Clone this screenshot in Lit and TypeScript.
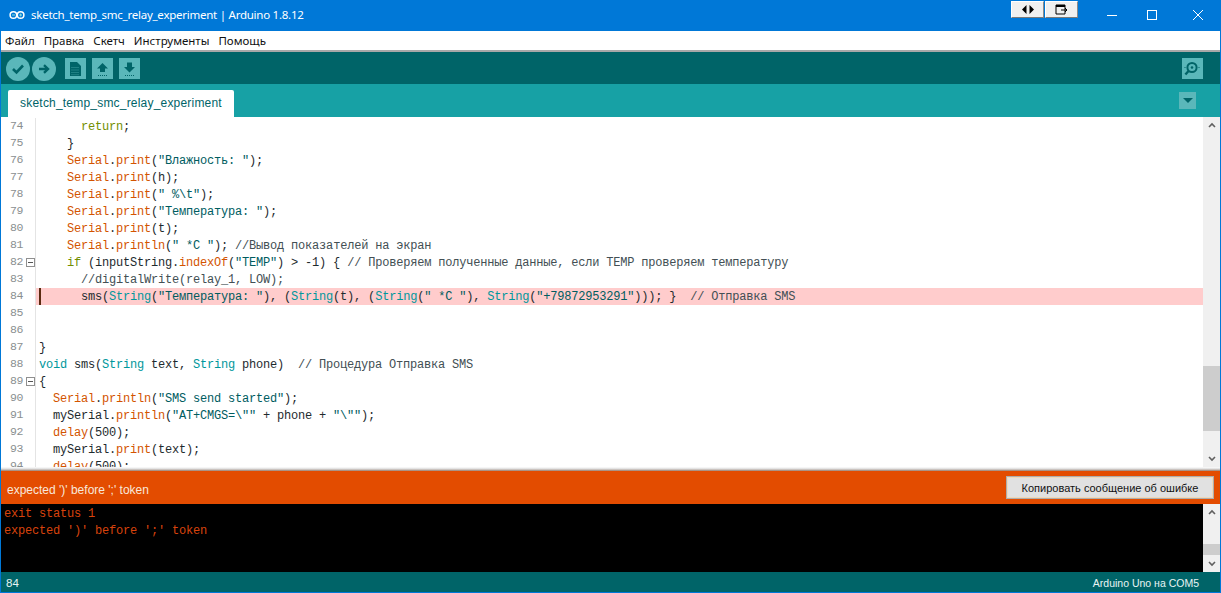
import { LitElement, html, css, svg } from "lit";
import { customElement } from "lit/decorators.js";

const CODE: [number, string][] = [
  [74, '      «k|return»;'],
  [75, '    }'],
  [76, '    «o|Serial».«o|print»(«s|"Влажность: "»);'],
  [77, '    «o|Serial».«o|print»(h);'],
  [78, '    «o|Serial».«o|print»(«s|" %\\t"»);'],
  [79, '    «o|Serial».«o|print»(«s|"Температура: "»);'],
  [80, '    «o|Serial».«o|print»(t);'],
  [81, '    «o|Serial».«o|println»(«s|" *C "»); «c|//Вывод показателей на экран»'],
  [82, '    «k|if» (inputString.«o|indexOf»(«s|"TEMP"») > -1) { «c|// Проверяем полученные данные, если TEMP проверяем температуру»'],
  [83, '      «c|//digitalWrite(relay_1, LOW);»'],
  [84, '      sms(«t|String»(«s|"Температура: "»), («t|String»(t), («t|String»(«s|" *C "»), «t|String»(«s|"+79872953291"»))); }  «c|// Отправка SMS»'],
  [85, ''],
  [86, ''],
  [87, '}'],
  [88, '«t|void» sms(«t|String» text, «t|String» phone)  «c|// Процедура Отправка SMS»'],
  [89, '{'],
  [90, '  «o|Serial».«o|println»(«s|"SMS send started"»);'],
  [91, '  mySerial.«o|println»(«s|"AT+CMGS=\\""» + phone + «s|"\\""»);'],
  [92, '  «o|delay»(500);'],
  [93, '  mySerial.«o|print»(text);'],
  [94, '  «o|delay»(500);'],
];

function tokens(src: string) {
  const out: unknown[] = [];
  const re = /«(\w)\|([^»]*)»/g;
  let last = 0;
  let m: RegExpExecArray | null;
  while ((m = re.exec(src))) {
    out.push(src.slice(last, m.index));
    out.push(html`<span class=${m[1]}>${m[2]}</span>`);
    last = m.index + m[0].length;
  }
  out.push(src.slice(last));
  return out;
}

const chevUp = svg`<path d="M1 5 L4 2 L7 5" fill="none" stroke="#606060" stroke-width="1.6"/>`;
const chevDown = svg`<path d="M1 2 L4 5 L7 2" fill="none" stroke="#606060" stroke-width="1.6"/>`;

@customElement("app-root")
export class AppRoot extends LitElement {
  static styles = css`
    :host {
      display: flex; flex-direction: column; width: 1221px; height: 593px; box-sizing: border-box;
      background: #0078d7; padding: 0 1px 1px 1px; overflow: hidden;
      font-family: "Liberation Sans", sans-serif;
    }
    .title { height: 31px; flex: none; display: flex; align-items: flex-start; color: #fff; margin-left: -1px; margin-right: -1px; }
    .logo { margin: 9px 6px 0 9px; flex: none; }
    .title-text { font: 11.5px/30px "Noto Sans", sans-serif; flex: 1; letter-spacing: -0.25px; white-space: nowrap; }
    .pins { display: flex; gap: 1px; margin-top: 1px; margin-right: 28px; }
    .pin { width: 33px; height: 17px; box-sizing: border-box; background: #f0f0f0; display: flex; align-items: center; justify-content: center;
      border: 1px solid; border-color: #fff #8a8a8a #7a7a7a #fff; }
    .win { display: flex; }
    .win svg { display: block; }

    .menu { height: 19px; flex: none; background: #fff; display: flex; gap: 9px; padding-left: 4px; border-bottom: 2px solid #a8a8a8;
      font: 11.5px/20px "Noto Sans", sans-serif; color: #111; }
    .toolbar { height: 32px; flex: none; background: #006468; display: flex; align-items: flex-start; padding: 6px 17px 0 5px; box-sizing: border-box; }
    .circ { width: 24px; height: 24px; border-radius: 50%; background: #5ab7ba; margin-top: -1px; display: flex; align-items: center; justify-content: center; margin-right: 2px; }
    .sq { width: 21px; height: 21px; background: #5ab7ba; display: flex; align-items: center; justify-content: center; margin-right: 6px; }
    .first { margin-left: 7px; }
    .spacer { flex: 1; }
    .sq.last { margin-right: 0; }

    .tabbar { height: 33px; flex: none; background: #17a1a5; display: flex; align-items: flex-end; padding: 0 24px 0 7px; }
    .tab { width: 226px; height: 27px; box-sizing: border-box; background: #fff; border-radius: 2px 2px 0 0; color: #006468; font-size: 12px; letter-spacing: 0.2px; line-height: 26px; text-align: center; }
    .drop { width: 17px; height: 17px; background: #5ab7ba; margin-bottom: 8px; display: flex; align-items: center; justify-content: center; }

    .editor { height: 350px; flex: none; background: #fff; display: flex; overflow: hidden; }
    .code { flex: 1; padding-top: 1px; overflow: hidden; font: 12px/17px "Liberation Mono", monospace; letter-spacing: -0.2px; color: #1e2a2e; }
    .line { display: flex; height: 17px; white-space: pre; }
    .num { width: 35px; flex: none; box-sizing: border-box; padding-left: 9px; color: #8a8f90; font: 11.5px/15px "Liberation Mono", monospace; letter-spacing: -0.4px; border-right: 1px solid #e4e4e4; position: relative; }
    .fold { position: absolute; left: 25px; top: 4px; width: 9px; height: 9px; box-sizing: border-box; border: 1px solid #8f8f8f; background: #fff; display: flex; align-items: center; justify-content: center; }
    .fold i { display: block; width: 5px; height: 1px; background: #555; }
    .txt { padding-left: 3px; flex: 1; line-height: 19px; }
    .err .txt { background: #ffcccc; position: relative; }
    .err .txt::before { content: ""; position: absolute; left: 3px; top: 0; width: 2px; height: 17px; background: #5a2a10; }
    .o { color: #d35400; }
    .s { color: #005c5f; }
    .t { color: #00979c; }
    .k { color: #728e00; }
    .c { color: #434f54; }

    .scroll { width: 17px; flex: none; background: #f0f0f0; display: flex; flex-direction: column; }
    .arrow { height: 17px; flex: none; display: flex; align-items: center; justify-content: center; }
    .track { flex: 1; position: relative; }
    .thumb { position: absolute; left: 0; right: 0; background: #cdcdcd; }
    .ed-thumb { top: 232px; height: 65px; }
    .con-thumb { top: 23px; height: 11px; }

    .divider { height: 4px; flex: none; background: linear-gradient(#ffffff, #dcdcdc 50%, #9a7a68); }
    .errbar { height: 33px; flex: none; background: #e34c00; display: flex; align-items: center; justify-content: space-between; padding: 0 6px 0 6px; color: #f8e8dc; font-size: 12px; }
    .errmsg { margin-top: 5px; }
    .copy { width: 208px; height: 23px; box-sizing: border-box; background: #e1e1e1; border: 1px solid #adadad; outline: 1px solid #f0d8b8; outline-offset: -2px; color: #111;
      display: flex; align-items: center; justify-content: center; font: 11px "Liberation Sans", sans-serif; }
    .console { height: 68px; flex: none; background: #000; display: flex; }
    .log { flex: 1; padding: 2px 0 0 3px; font: 12px/17px "Liberation Mono", monospace; letter-spacing: -0.2px; color: #d8430c; white-space: pre; }
    .status { height: 20px; flex: none; box-sizing: border-box; padding: 1px 21px 0 5px; background: #006468; color: #e8f4f4; display: flex; justify-content: space-between; align-items: center; }
    .ln { font-size: 11.5px; }
    .board { font-size: 10.5px; }
  `;

  render() {
    const dark = "#006468";
    const dots = svg`<path d="M3 14.5 H12" stroke=${dark} stroke-width="1" stroke-dasharray="1 1"/>`;
    return html`
      <div class="title">
        <svg class="logo" width="16" height="12" viewBox="0 0 16 12">
          <circle cx="4.4" cy="6" r="3.3" fill="none" stroke="#fff" stroke-width="1.5"/>
          <circle cx="11.6" cy="6" r="3.3" fill="none" stroke="#fff" stroke-width="1.5"/>
          <path d="M3 6 H6 M10.2 6 H13 M11.6 4.6 V7.4" stroke="#8fe0d8" stroke-width="1"/>
        </svg>
        <div class="title-text">sketch_temp_smc_relay_experiment | Arduino 1.8.12</div>
        <div class="pins">
          <div class="pin"><svg width="12" height="9" viewBox="0 0 12 9"><path d="M4.5 0 V9 L0 4.5 Z M7.5 0 V9 L12 4.5 Z" fill="#000"/></svg></div>
          <div class="pin"><svg width="13" height="11" viewBox="0 0 13 11"><path d="M1 1 H10 V10 H1 Z" fill="none" stroke="#000"/><path d="M1 2 H10" stroke="#000" stroke-width="2"/><path d="M6 6 H12 M10 4 L12 6 L10 8" fill="none" stroke="#000"/></svg></div>
        </div>
        <div class="win">
          <svg width="115" height="30" viewBox="0 0 115 30">
            <path d="M1 15.5 H11" stroke="#fff"/>
            <rect x="41.5" y="10.5" width="9" height="9" fill="none" stroke="#fff"/>
            <path d="M87 10 L97 20 M97 10 L87 20" stroke="#fff" fill="none"/>
          </svg>
        </div>
      </div>
      <div class="menu"><span>Файл</span><span>Правка</span><span>Скетч</span><span>Инструменты</span><span>Помощь</span></div>
      <div class="toolbar">
        <div class="circ"><svg width="14" height="12" viewBox="0 0 14 12"><path d="M2 6 L5.5 9.5 L12 2.5" fill="none" stroke=${dark} stroke-width="2.6"/></svg></div>
        <div class="circ"><svg width="14" height="12" viewBox="0 0 14 12"><path d="M2 6 H10 M7 2.2 L11 6 L7 9.8" fill="none" stroke=${dark} stroke-width="2.4"/></svg></div>
        <div class="sq first"><svg width="15" height="16" viewBox="0 0 15 16"><path d="M2 1 H9 L13 5 V15 H2 Z" fill=${dark}/><path d="M3.5 6.5 H11.5 M3.5 9 H11.5 M3.5 11.5 H11.5 M3.5 13.7 H11.5" stroke="#5ab7ba" stroke-width="0.7" stroke-dasharray="1 1"/></svg></div>
        <div class="sq"><svg width="15" height="16" viewBox="0 0 15 16"><path d="M7.5 2 L13 7.5 H10 V11 H5 V7.5 H2 Z" fill=${dark}/>${dots}</svg></div>
        <div class="sq"><svg width="15" height="16" viewBox="0 0 15 16"><path d="M5 1.5 H10 V6 H13 L7.5 11.5 L2 6 H5 Z" fill=${dark}/>${dots}</svg></div>
        <div class="spacer"></div>
        <div class="sq last"><svg width="19" height="17" viewBox="0 0 19 17">
          <circle cx="9" cy="7.5" r="4.6" fill="none" stroke=${dark} stroke-width="2"/>
          <circle cx="9" cy="7.5" r="1.3" fill=${dark}/>
          <path d="M5.6 11 L2.4 14.5" stroke=${dark} stroke-width="2.4"/>
          <path d="M1.5 7.5 H2.5 M15.5 7.5 H17.5" stroke=${dark} stroke-dasharray="1 1"/>
        </svg></div>
      </div>
      <div class="tabbar">
        <div class="tab">sketch_temp_smc_relay_experiment</div>
        <div class="spacer"></div>
        <div class="drop"><svg width="10" height="5" viewBox="0 0 10 5"><path d="M0 0 H10 L5 5 Z" fill=${dark}/></svg></div>
      </div>
      <div class="editor">
        <div class="code">
          ${CODE.map(([n, src]) => html`
            <div class="line ${n === 84 ? "err" : ""}">
              <div class="num">${n}${n === 82 || n === 89 ? html`<span class="fold"><i></i></span>` : ""}</div>
              <div class="txt">${tokens(src)}</div>
            </div>`)}
        </div>
        <div class="scroll">
          <div class="arrow"><svg width="8" height="7" viewBox="0 0 8 7">${chevUp}</svg></div>
          <div class="track"><div class="thumb ed-thumb"></div></div>
          <div class="arrow"><svg width="8" height="7" viewBox="0 0 8 7">${chevDown}</svg></div>
        </div>
      </div>
      <div class="divider"></div>
      <div class="errbar"><span class="errmsg">expected ')' before ';' token</span><div class="copy">Копировать сообщение об ошибке</div></div>
      <div class="console">
        <div class="log">exit status 1
expected ')' before ';' token</div>
        <div class="scroll">
          <div class="arrow"><svg width="8" height="7" viewBox="0 0 8 7">${chevUp}</svg></div>
          <div class="track"><div class="thumb con-thumb"></div></div>
          <div class="arrow"><svg width="8" height="7" viewBox="0 0 8 7">${chevDown}</svg></div>
        </div>
      </div>
      <div class="status"><span class="ln">84</span><span class="board">Arduino Uno на COM5</span></div>
    `;
  }
}
